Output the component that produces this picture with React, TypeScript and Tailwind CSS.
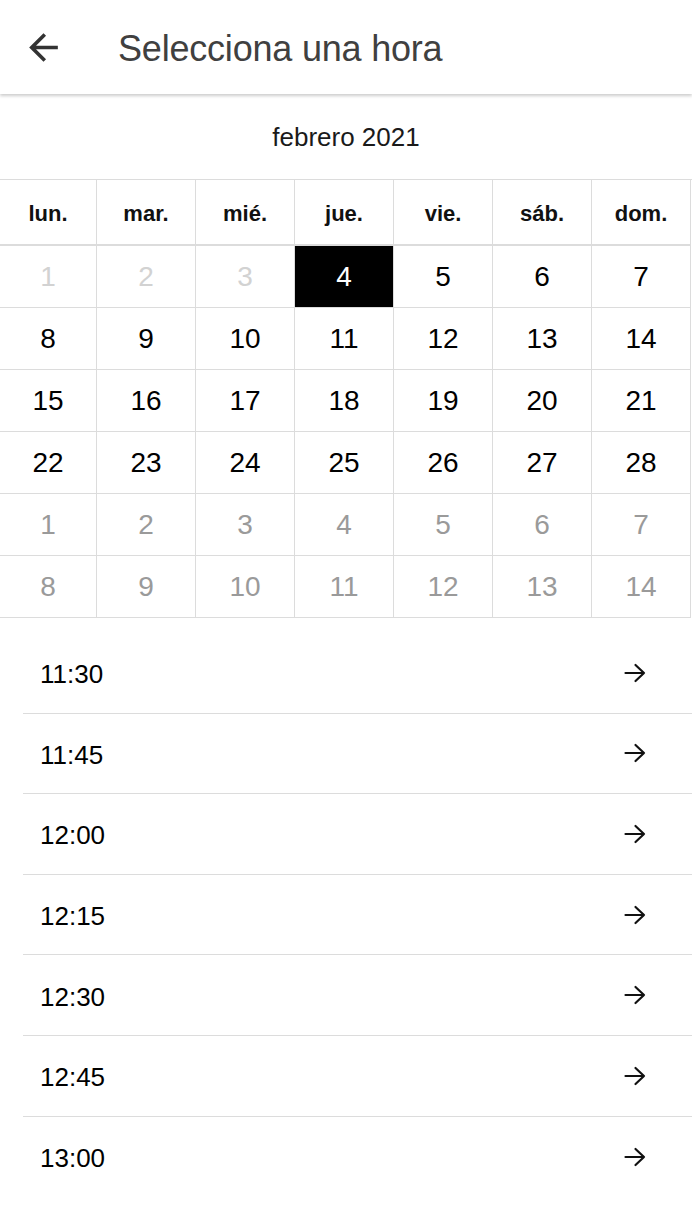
import { Fragment } from 'react';

const weekDays = ['lun.', 'mar.', 'mié.', 'jue.', 'vie.', 'sáb.', 'dom.'];

type Day = { n: number; kind: 'past' | 'current' | 'next' };

const buildDays = (): Day[] => {
  const days: Day[] = [];
  for (let i = 1; i <= 28; i++) days.push({ n: i, kind: i < 4 ? 'past' : 'current' });
  for (let i = 1; i <= 14; i++) days.push({ n: i, kind: 'next' });
  return days;
};

const times = ['11:30', '11:45', '12:00', '12:15', '12:30', '12:45', '13:00'];

function BackIcon() {
  return (
    <svg width="43" height="43" viewBox="0 0 24 24" fill="#333">
      <path d="M20 11H7.83l5.59-5.59L12 4l-8 8 8 8 1.41-1.41L7.83 13H20v-2z" />
    </svg>
  );
}

function ArrowIcon() {
  return (
    <svg width="22" height="20" viewBox="0 0 22 20" fill="none" stroke="#111" strokeWidth="2.2" strokeLinecap="round" strokeLinejoin="round">
      <path d="M1.5 10h18.5M11.5 2l8.5 8-8.5 8" />
    </svg>
  );
}

function App() {
  const days = buildDays();

  return (
    <div className="min-h-screen w-full bg-white font-['Liberation_Sans',Arial,sans-serif] overflow-hidden">
      {/* header */}
      <header className="relative z-10 h-[94px] flex items-center bg-white shadow-[0_2px_3px_rgba(0,0,0,0.2)]">
        <div className="w-[118px] pl-[22px] flex items-center">
          <BackIcon />
        </div>
        <h1 className="pt-[4px] text-[36px] leading-none text-[#404040] tracking-[-0.2px]">Selecciona una hora</h1>
      </header>

      {/* month */}
      <div className="h-[85px] pt-[2px] flex items-center justify-center text-[26px] text-[#1a1a1a]">
        febrero 2021
      </div>

      {/* calendar grid */}
      <div className="grid grid-cols-[97px_repeat(6,99px)] border-t border-[#dcdcdc]">
        {weekDays.map(d => (
          <div
            key={d}
            className="h-[66px] pt-[3px] flex items-center justify-center border-r border-b-2 border-[#dcdcdc] text-[22px] font-bold text-[#111]"
          >
            {d}
          </div>
        ))}
        {days.map((d, i) => {
          const selected = d.kind === 'current' && d.n === 4;
          const color = selected
            ? 'bg-black text-white'
            : d.kind === 'past'
              ? 'text-[#d2d2d2]'
              : d.kind === 'next'
                ? 'text-[#9a9a9a]'
                : 'text-black';
          return (
            <Fragment key={i}>
              <div
                className={`h-[62px] flex items-center justify-center border-r border-b border-[#dcdcdc] text-[28px] ${color}`}
              >
                {d.n}
              </div>
            </Fragment>
          );
        })}
      </div>

      {/* time slots */}
      <ul className="ml-[23px] pt-[15px]">
        {times.map((t, i) => (
          <li
            key={t}
            className={`h-[80.6px] flex items-center justify-between pl-[17px] pr-[46px] ${i < times.length - 1 ? 'border-b border-[#dcdcdc]' : ''}`}
          >
            <span className="pt-[4px] text-[26px] text-black">{t}</span>
            <ArrowIcon />
          </li>
        ))}
      </ul>
    </div>
  );
}

export default App;
